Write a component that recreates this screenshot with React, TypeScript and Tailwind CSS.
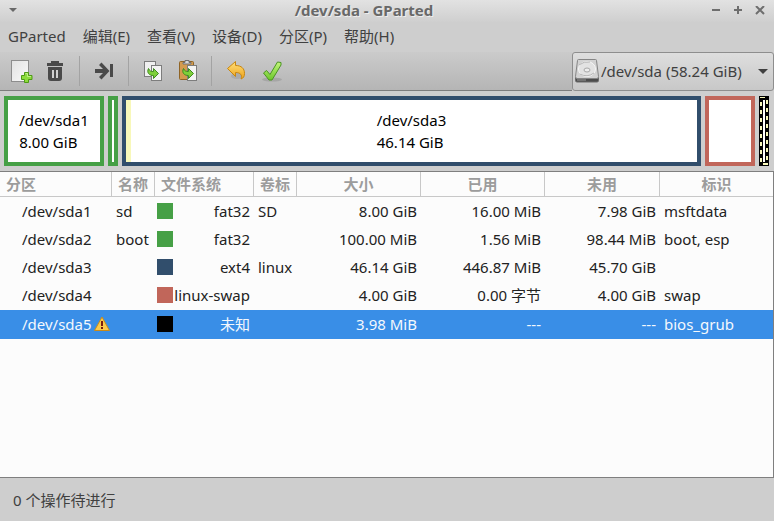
import type { ReactNode } from "react";

type Partition = {
  path: string;
  warning?: boolean;
  name: string;
  swatch: string;
  fs: string;
  label: string;
  size: string;
  used: string;
  unused: string;
  flags: string;
  selected?: boolean;
  height: string;
};

const partitions: Partition[] = [
  { path: "/dev/sda1", name: "sd", swatch: "bg-[#46a046]", fs: "fat32", label: "SD", size: "8.00 GiB", used: "16.00 MiB", unused: "7.98 GiB", flags: "msftdata", height: "h-7" },
  { path: "/dev/sda2", name: "boot", swatch: "bg-[#46a046]", fs: "fat32", label: "", size: "100.00 MiB", used: "1.56 MiB", unused: "98.44 MiB", flags: "boot, esp", height: "h-7" },
  { path: "/dev/sda3", name: "", swatch: "bg-[#314e6c]", fs: "ext4", label: "linux", size: "46.14 GiB", used: "446.87 MiB", unused: "45.70 GiB", flags: "", height: "h-7" },
  { path: "/dev/sda4", name: "", swatch: "bg-[#c1665a]", fs: "linux-swap", label: "", size: "4.00 GiB", used: "0.00 字节", unused: "4.00 GiB", flags: "swap", height: "h-[29px]" },
  { path: "/dev/sda5", warning: true, name: "", swatch: "bg-black", fs: "未知", label: "", size: "3.98 MiB", used: "---", unused: "---", flags: "bios_grub", selected: true, height: "h-[29px]" },
];

const menus = ["GParted", "编辑(E)", "查看(V)", "设备(D)", "分区(P)", "帮助(H)"];

function NewIcon() {
  return (
    <svg width="24" height="24" viewBox="0 0 24 24">
      <defs>
        <linearGradient id="paper" x1="0" y1="0" x2="1" y2="1">
          <stop offset="0" stopColor="#e2e2e2" />
          <stop offset="1" stopColor="#fafafa" />
        </linearGradient>
      </defs>
      <rect x="2.5" y="1.5" width="17" height="21" fill="url(#paper)" stroke="#8d8d8d" />
      <path d="M15.500 13.500h4v3h3.500v4h-3.500v3h-4v-3h-3v-4h3z" fill="#8ddc3c" stroke="#4e9a16" />
      <path d="M16.500 14.500h2v3h3.500" fill="none" stroke="#c0f088" />
    </svg>
  );
}

function TrashIcon() {
  return (
    <svg width="24" height="24" viewBox="0 0 24 24" fill="#4a4a4a">
      <path d="M8 2h8v2h4v3H4V4h4z" />
      <path d="M5 8h14v11q0 3-3 3H8q-3 0-3-3z" />
      <path d="M9 11h2v8H9zM13 11h2v8h-2z" fill="#d0d0d0" />
    </svg>
  );
}

function ResizeIcon() {
  return (
    <svg width="24" height="24" viewBox="0 0 24 24" fill="#4a4a4a">
      <path d="M3 10h8L7 6l2.500-2.500L17.500 12l-8 8.500L7 18l4-4H3z" />
      <path d="M18 5h3v13h-3z" />
    </svg>
  );
}

function GreenArrow() {
  return (
    <path
      d="M8.500 9.500c-2 4 .5 7 5 7v3l5-5-5-5v3c-2.500 0-4-.5-5-3z"
      fill="#7ed03a"
      stroke="#3f8a20"
      strokeLinejoin="round"
    />
  );
}

function CopyIcon() {
  return (
    <svg width="24" height="24" viewBox="0 0 24 24">
      <rect x="3.500" y="2.500" width="11" height="15" fill="#f0f0f0" stroke="#7d7d7d" />
      <rect x="10.500" y="6.500" width="10" height="15" fill="#f4f4f4" stroke="#7d7d7d" />
      <g transform="translate(-1 0)">
        <GreenArrow />
      </g>
    </svg>
  );
}

function PasteIcon() {
  return (
    <svg width="24" height="24" viewBox="0 0 24 24">
      <rect x="4.500" y="2.500" width="14" height="18" rx="1" fill="#d39b4e" stroke="#8f6426" />
      <path d="M8 5V3.500h2V1.500h4v2h2V5z" fill="#d8d8d8" stroke="#707070" />
      <rect x="12.500" y="6.500" width="9" height="15" fill="#f4f4f4" stroke="#7d7d7d" />
      <GreenArrow />
    </svg>
  );
}

function UndoIcon() {
  return (
    <svg width="24" height="24" viewBox="0 0 24 24">
      <defs>
        <linearGradient id="gold" x1="0" y1="0" x2="0" y2="1">
          <stop offset="0" stopColor="#ffe07a" />
          <stop offset="1" stopColor="#eda21c" />
        </linearGradient>
      </defs>
      <ellipse cx="13" cy="17" rx="6" ry="3" fill="#999" opacity=".5" />
      <path
        d="M11.500 2.500v4c6 0 9 3 9 8 0 3-1 4.500-3.500 5.500 1.500-4-.5-6.500-5.500-6.500v4L3.500 9.500z"
        fill="url(#gold)"
        stroke="#c8860f"
        strokeLinejoin="round"
      />
    </svg>
  );
}

function ApplyIcon() {
  return (
    <svg width="28" height="24" viewBox="-4 0 28 24">
      <defs>
        <linearGradient id="lime" x1="0" y1="0" x2="0" y2="1">
          <stop offset="0" stopColor="#c4f57c" />
          <stop offset="1" stopColor="#6cc72c" />
        </linearGradient>
      </defs>
      <ellipse cx="12" cy="20.500" rx="10" ry="2" fill="#888" opacity=".4" />
      <path
        d="M3.500 14l3-2.500 3.500 4 7.500-12.500 3.500.5v2.500L12 21H9z"
        fill="url(#lime)"
        stroke="#4a9423"
        strokeLinejoin="round"
      />
    </svg>
  );
}

function DriveIcon() {
  return (
    <svg width="24" height="24" viewBox="0 0 24 24" className="shrink-0">
      <path d="M.5 18.500h23v3q0 1.500-1.500 1.500H2Q.5 23 .5 21.500z" fill="#4c4c4c" stroke="#6a6a6a" />
      <path d="M3.500.5h17q1 0 1 1l2 16q0 2-1.500 2H2q-1.500 0-1.500-2l2-16q0-1 1-1z" fill="#d2d2d2" stroke="#858585" />
      <ellipse cx="12" cy="10" rx="8.500" ry="7.500" fill="#e2e2e2" stroke="#f6f6f6" />
      <path d="M4 6q5-4 11-3M5 15q7 4 14-1" fill="none" stroke="#b5b5b5" />
      <ellipse cx="12" cy="11" rx="3" ry="2" fill="#ededed" stroke="#a8a8a8" />
      <path d="M2 21h9" stroke="#999" />
    </svg>
  );
}

function WarningIcon() {
  return (
    <svg width="16" height="16" viewBox="0 0 16 16">
      <path d="M8 1L15.500 14.500H.5z" fill="#fbc94c" stroke="#c98a1a" strokeLinejoin="round" />
      <path d="M7 5h2v5H7zM7 11h2v2H7z" fill="#7a1c10" />
    </svg>
  );
}

function ToolButton({ label, children }: { label: string; children: ReactNode }) {
  return (
    <button type="button" aria-label={label} className="flex w-[34px] items-center justify-center">
      {children}
    </button>
  );
}

function Separator() {
  return <div className="mx-[7px] my-1 w-px bg-[#a3a3a3]" />;
}

function HeaderCell({ children, center }: { children: ReactNode; center?: boolean }) {
  return (
    <th
      className={
        "border-r border-b border-[#c8c8c8] px-1.5 font-bold last:border-r-0 " +
        (center ? "text-center" : "text-left")
      }
    >
      {children}
    </th>
  );
}

function WindowControls() {
  const control = "flex size-[22px] items-center justify-center";
  return (
    <div className="flex text-[#6e6e6e]">
      <button type="button" aria-label="最小化" className={control}>
        <svg width="10" height="10" stroke="currentColor" strokeWidth="2"><path d="M1 4h8" /></svg>
      </button>
      <button type="button" aria-label="最大化" className={control}>
        <svg width="10" height="10" stroke="currentColor" strokeWidth="2"><path d="M1 4h8M5 0v8" /></svg>
      </button>
      <button type="button" aria-label="关闭" className={control}>
        <svg width="10" height="10" stroke="currentColor" strokeWidth="2"><path d="M1 0l8 8M9 0L1 8" /></svg>
      </button>
    </div>
  );
}

function DiskMap() {
  return (
    <div className="flex h-20 gap-1 bg-[#cecece] py-[5px] pr-[5px] pl-1 text-black">
      <div className="flex w-[100px] shrink-0 items-center justify-center border-4 border-[#46a046] bg-white leading-[22px]">
        <div>/dev/sda1<br />8.00 GiB</div>
      </div>
      <div className="w-2.5 shrink-0 border-4 border-[#46a046] bg-white" />
      <div className="flex flex-1 border-4 border-[#314e6c] bg-white leading-[22px]">
        <div className="w-[5px] bg-[#f8f8ba]" />
        <div className="flex flex-1 items-center justify-center pr-[5px]">
          <div>/dev/sda3<br />46.14 GiB</div>
        </div>
      </div>
      <div className="w-[50px] shrink-0 border-4 border-[#c1665a] bg-white" />
      <svg width="10" height="70" className="shrink-0">
        <path d="M0 0h10v70H0z" fill="#000" />
        <path d="M4 4h2v62H4z" fill="#fff" />
        <path d="M2 6v60" stroke="#f8f8ba" strokeWidth="2" strokeDasharray="4 4" />
        <path d="M8 4v62" stroke="#f8f8ba" strokeWidth="2" strokeDasharray="4 4" />
        <path d="M1 1h5v1H1zM4 67h5v2H4z" fill="#f8f8ba" />
      </svg>
    </div>
  );
}

export default function App() {
  return (
    <div className="flex min-h-screen flex-col bg-[#cecece] font-['Noto_Sans','Noto_Sans_CJK_SC',sans-serif] text-[15px] leading-5 text-[#404040]">
      <header className="grid h-[22px] grid-cols-[1fr_auto_1fr] items-center bg-linear-to-b from-[#e2e2e2] to-[#cfcfcf] pr-[3px] pl-2">
        <button type="button" aria-label="窗口菜单" className="w-4">
          <svg width="10" height="6" fill="#686868"><path d="M1 0h8L5 4z" /></svg>
        </button>
        <h1 className="pr-[51px] pb-0.5 font-bold text-[#686868] [text-shadow:1px_1px_0_#eeeeee]">/dev/sda - GParted</h1>
        <div className="flex justify-end"><WindowControls /></div>
      </header>

      <nav className="flex h-[30px] items-center gap-[17px] px-2 pb-0.5">
        {menus.map((m) => (
          <button key={m} type="button">{m}</button>
        ))}
      </nav>

      <div className="flex h-[39px]">
        <div className="flex flex-1 border-b border-[#7d7d7d] bg-linear-to-b from-[#cbcbcb] to-[#b5b5b5] pl-1">
          <ToolButton label="新建"><NewIcon /></ToolButton>
          <ToolButton label="删除"><TrashIcon /></ToolButton>
          <Separator />
          <ToolButton label="调整大小/移动"><ResizeIcon /></ToolButton>
          <Separator />
          <ToolButton label="复制"><CopyIcon /></ToolButton>
          <ToolButton label="粘贴"><PasteIcon /></ToolButton>
          <Separator />
          <ToolButton label="撤销"><UndoIcon /></ToolButton>
          <ToolButton label="应用"><ApplyIcon /></ToolButton>
        </div>
        <div className="flex w-[202px] items-center rounded-[3px] border border-[#8e8e8e] bg-linear-to-b from-[#dedede] to-[#c8c8c8] px-0.5 pb-0.5">
          <DriveIcon />
          <select aria-label="设备" className="min-w-0 flex-1 appearance-none bg-transparent pl-0.5">
            <option>/dev/sda (58.24 GiB)</option>
          </select>
          <svg width="10" height="6" className="mr-[3px]" fill="#404040"><path d="M0 1h10L5 6z" /></svg>
        </div>
      </div>

      <DiskMap />

      <main className="flex-1 border-y border-r border-[#7f7f7f] bg-[#fcfcfc] text-[#222222]">
        <table className="w-full table-fixed border-separate border-spacing-0">
          <colgroup>
            <col className="w-[112px]" />
            <col className="w-[43px]" />
            <col className="w-[99px]" />
            <col className="w-[43px]" />
            <col className="w-[124px]" />
            <col className="w-[124px]" />
            <col className="w-[115px]" />
            <col />
          </colgroup>
          <thead>
            <tr className="h-[25px] whitespace-nowrap text-[#9c9c9c]">
              <HeaderCell>分区</HeaderCell>
              <HeaderCell>名称</HeaderCell>
              <HeaderCell>文件系统</HeaderCell>
              <HeaderCell>卷标</HeaderCell>
              <HeaderCell center>大小</HeaderCell>
              <HeaderCell center>已用</HeaderCell>
              <HeaderCell center>未用</HeaderCell>
              <HeaderCell center>标识</HeaderCell>
            </tr>
          </thead>
          <tbody>
            {partitions.map((p) => (
              <tr
                key={p.path}
                className={
                  p.height +
                  " whitespace-nowrap *:pt-1 *:align-top " +
                  (p.selected ? "bg-[#398ee7] text-[#f4f8fd]" : "")
                }
              >
                <td className="pl-[22px]">
                  <div className="flex items-center gap-0.5">
                    {p.path}
                    {p.warning && <WarningIcon />}
                  </div>
                </td>
                <td className="pl-1">{p.name}</td>
                <td className="pr-1 pl-0.5">
                  <div className="flex items-center justify-between">
                    <span className={"size-4 shrink-0 " + p.swatch} />
                    {p.fs}
                  </div>
                </td>
                <td className="pl-1">{p.label}</td>
                <td className="pr-1 text-right">{p.size}</td>
                <td className="pr-1 text-right">{p.used}</td>
                <td className="pr-1 text-right">{p.unused}</td>
                <td className="pl-1">{p.flags}</td>
              </tr>
            ))}
          </tbody>
        </table>
      </main>

      <footer className="flex h-[43px] items-center px-[13px]">0 个操作待进行</footer>
    </div>
  );
}
